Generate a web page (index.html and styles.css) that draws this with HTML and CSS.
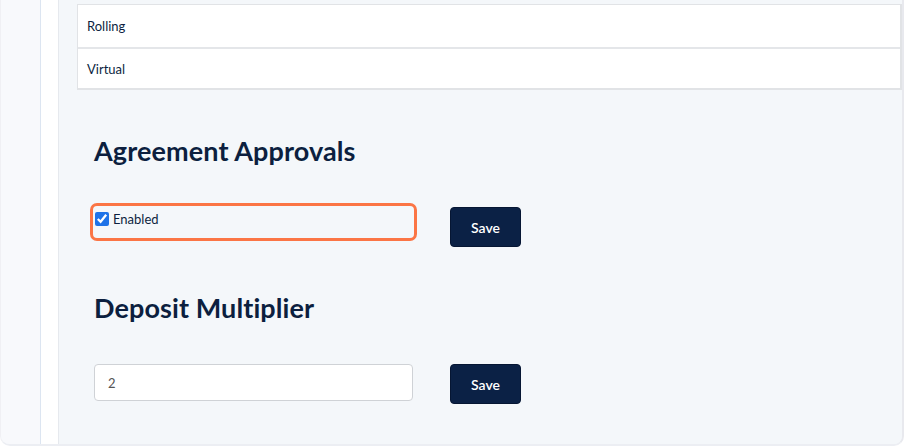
FILE: index.html
```html
<!DOCTYPE html>
<html lang="en">
<head>
<meta charset="utf-8">
<title>Settings</title>
<link rel="stylesheet" href="styles.css">
</head>
<body>
<div class="frame">
  <div class="rail"></div>
  <div class="subrail"></div>
  <main class="content">
    <div class="list">
      <div class="list-row">Rolling</div>
      <div class="list-row">Virtual</div>
    </div>
    <section class="setting">
      <h2 class="setting-title">Agreement Approvals</h2>
      <div class="setting-row">
        <label class="check-field">
          <input type="checkbox" class="check" checked>
          <span>Enabled</span>
        </label>
        <button class="btn btn-offset">Save</button>
      </div>
    </section>
    <section class="setting setting-second">
      <h2 class="setting-title">Deposit Multiplier</h2>
      <div class="setting-row setting-row-input">
        <input class="text-input" type="text" value="2">
        <button class="btn">Save</button>
      </div>
    </section>
  </main>
</div>
</body>
</html>
```

FILE: styles.css
```css
* { box-sizing: border-box; }
html, body {
  margin: 0;
  padding: 0;
  background: #ffffff;
}
body {
  font-family: "Lato", "Open Sans", sans-serif;
  color: #0c1f3f;
}
.frame {
  width: 904px;
  height: 446px;
  display: flex;
  overflow: hidden;
  border-right: 2px solid #e8e9ee;
  border-bottom: 2px solid #eceef3;
  border-left: 1px solid #f0f0f4;
  border-radius: 0 0 10px 10px;
  background: #f4f7fa;
}
.rail {
  width: 40px;
  flex: none;
  background: #f8f9fc;
  border-right: 1px solid #dce5f1;
}
.subrail {
  width: 18px;
  flex: none;
  background: #ffffff;
  border-right: 1px solid #e6e9ee;
}
.content {
  flex: 1;
  padding: 4px 0 0 18px;
  background: #f4f7fa;
}
.list {
  background: #ffffff;
  border: 1px solid #e1e3e6;
  border-right-width: 2px;
  border-bottom-width: 2px;
}
.list-row {
  height: 42px;
  display: flex;
  align-items: center;
  padding-left: 9px;
  font-size: 13px;
  color: #0c1f3f;
}
.list-row + .list-row {
  border-top: 2px solid #e4e6e9;
  height: 41px;
}
.setting {
  padding-left: 17px;
  padding-top: 46px;
}
.setting-second {
  padding-top: 46px;
}
.setting-title {
  margin: 0;
  font-size: 27px;
  line-height: 30px;
  font-weight: 700;
  color: #0c1f3f;
  letter-spacing: 0.1px;
}
.setting-row {
  display: flex;
  align-items: flex-start;
  gap: 33px;
  margin-top: 37px;
}
.setting-row-input {
  margin-top: 41px;
}
.check-field {
  margin-left: -4px;
  width: 327px;
  height: 38px;
  border: 3px solid #fb7545;
  border-radius: 7px;
  display: flex;
  align-items: center;
  gap: 4px;
  padding: 0 0 6px 2px;
  font-size: 13px;
  color: #0c1f3f;
}
.check {
  margin: 0;
  width: 14px;
  height: 14px;
  accent-color: #1f73e8;
}
.btn {
  width: 71px;
  height: 40px;
  background: #0b2145;
  color: #ffffff;
  border: 1px solid #061633;
  border-radius: 4px;
  font-family: "Lato", sans-serif;
  font-size: 14px;
  font-weight: 600;
  cursor: pointer;
}
.btn-offset {
  margin-top: 4px;
}
.text-input {
  width: 319px;
  height: 37px;
  border: 1px solid #cfd2d6;
  border-radius: 4px;
  background: #ffffff;
  padding: 0 0 0 13px;
  font-family: "Lato", sans-serif;
  font-size: 13px;
  color: #555555;
  margin-right: 4px;
}
```
